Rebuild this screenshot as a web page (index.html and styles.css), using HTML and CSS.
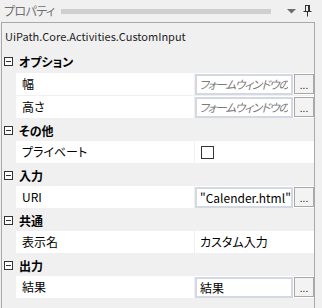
FILE: index.html
```html
<!DOCTYPE html>
<html lang="ja">
<head>
<meta charset="utf-8">
<link rel="stylesheet" href="styles.css">
</head>
<body>
<div class="panel">
  <div class="titlebar">
    <span class="title">プロパティ</span>
    <span class="grip"></span>
    <svg class="tb-icon" width="9" height="6" viewBox="0 0 9 6"><path d="M0 1h9L4.5 5.5z" fill="#6d6d6d"/></svg>
    <svg class="tb-icon pin" width="9" height="12" viewBox="0 0 9 12"><path d="M2 0.5h5M2.5 0.5v6M6.5 0.5v6M5.5 0.5v6M0.5 6.5h8M4.5 6.5v5" stroke="#333" stroke-width="1" fill="none"/></svg>
  </div>
  <div class="box">
    <div class="typename">UiPath.Core.Activities.CustomInput</div>
    <div class="grid">
      <div class="cat first"><span class="toggle"></span><span class="cat-name">オプション</span></div>
      <div class="row"><span class="name">幅</span><span class="value"><span class="input ph"><span class="clip">フォームウィンドウの</span></span><span class="dots">...</span></span></div>
      <div class="row"><span class="name">高さ</span><span class="value"><span class="input ph"><span class="clip">フォームウィンドウの</span></span><span class="dots">...</span></span></div>
      <div class="cat"><span class="toggle"></span><span class="cat-name">その他</span></div>
      <div class="row"><span class="name">プライベート</span><span class="value"><span class="check"></span></span></div>
      <div class="cat"><span class="toggle"></span><span class="cat-name">入力</span></div>
      <div class="row"><span class="name">URI</span><span class="value"><span class="input">"Calender.html"</span><span class="dots">...</span></span></div>
      <div class="cat"><span class="toggle"></span><span class="cat-name">共通</span></div>
      <div class="row"><span class="name">表示名</span><span class="value"><span class="plain">カスタム入力</span></span></div>
      <div class="cat"><span class="toggle"></span><span class="cat-name">出力</span></div>
      <div class="row"><span class="name">結果</span><span class="value"><span class="input">結果</span><span class="dots">...</span></span></div>
    </div>
  </div>
</div>
</body>
</html>
```

FILE: styles.css
```css
* { box-sizing: border-box; }
html, body { margin: 0; padding: 0; }
body {
  width: 322px;
  height: 308px;
  overflow: hidden;
  background: #f0f0f0;
  font-family: "Noto Sans CJK JP", "Noto Sans", sans-serif;
  font-size: 12px;
  font-feature-settings: "palt";
  color: #000;
}
.panel {
  width: 322px;
  height: 308px;
  display: flex;
  flex-direction: column;
}
.titlebar {
  height: 22px;
  display: flex;
  align-items: center;
  padding: 0 10px 0 4px;
}
.title {
  color: #707070;
  font-size: 12px;
  letter-spacing: -0.6px;
  line-height: 22px;
}
.grip {
  flex: 1;
  height: 5px;
  margin: 0 10px 0 6px;
  background-image: radial-gradient(circle, #a8a8a8 0.6px, transparent 0.8px);
  background-size: 2px 2px;
}
.tb-icon { display: block; margin-left: 6px; }
.pin { margin-left: 7px; }
.box {
  flex: 1;
  margin: 0 7px 0 1px;
  border: 1px solid #a9a9a9;
  border-bottom: none;
  background: #f0f0f0;
  display: flex;
  flex-direction: column;
}
.typename {
  height: 27px;
  line-height: 26px;
  padding-left: 3px;
  font-size: 11px;
  color: #1e1e1e;
}
.grid { display: flex; flex-direction: column; }
.cat {
  height: 22px;
  display: flex;
  align-items: center;
  padding-left: 2px;
  background: #f0f0f0;
}
.cat.first { height: 23px; }
.toggle {
  width: 9px;
  height: 9px;
  border: 1px solid #333;
  position: relative;
  margin-right: 6px;
  background: #fff;
}
.toggle::after {
  content: "";
  position: absolute;
  left: 1px;
  top: 3px;
  width: 5px;
  height: 1px;
  background: #333;
}
.cat-name { font-weight: bold; }
.row {
  height: 23px;
  display: grid;
  grid-template-columns: 178px 1fr;
  margin-left: 14px;
  background: #fff;
  border-bottom: 1px solid #f0f0f0;
}
.name {
  padding-left: 6px;
  line-height: 22px;
  white-space: nowrap;
}
.value {
  border-left: 1px solid #f0f0f0;
  display: flex;
  align-items: center;
  gap: 1px;
}
.input {
  width: 98px;
  height: 21px;
  border: 2px solid #d4d8e2;
  padding: 0 3px;
  line-height: 17px;
  white-space: nowrap;
  overflow: hidden;
  background: #fff;
}
.ph {
  color: #7a7a7a;
  font-style: italic;
  font-size: 11.5px;
  padding-left: 2px;
  letter-spacing: -1.1px;
}
.clip { display: block; overflow: hidden; white-space: nowrap; }
.dots {
  width: 20px;
  height: 20px;
  border: 1px solid #a8a8a8;
  background: #f3f3f3;
  font-size: 10px;
  line-height: 20px;
  text-align: center;
  color: #222;
}
.plain { padding-left: 5px; line-height: 22px; }
.check {
  width: 13px;
  height: 13px;
  border: 1px solid #333;
  background: #fff;
  margin-left: 6px;
}
```
